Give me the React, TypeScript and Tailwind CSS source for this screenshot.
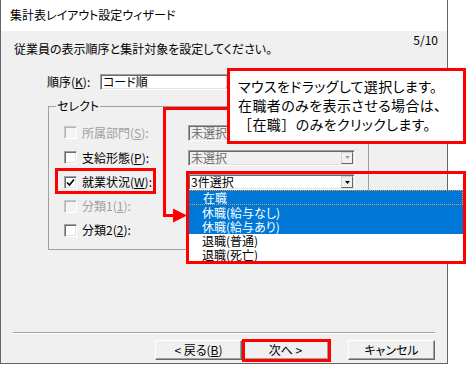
import React from "react";

const sunken =
  "border border-t-[#a0a0a0] border-l-[#a0a0a0] border-b-white border-r-white shadow-[inset_1px_1px_0_#696969,inset_-1px_-1px_0_#e3e3e3]";

function Arrow({ disabled }: { disabled?: boolean }) {
  return (
    <svg width="5" height="3" viewBox="0 0 5 3">
      <polygon points="0,0 5,0 2.5,3" fill={disabled ? "#a0a0a0" : "#000"} />
    </svg>
  );
}

function Combo({ text, disabled, w }: { text: string; disabled?: boolean; w: string }) {
  return (
    <div className={`${w} h-[16px] flex items-center ${sunken} ${disabled ? "bg-[#f0f0f0] text-[#6d6d6d]" : "bg-white"}`}>
      <span className="flex-1 pl-[2px] leading-[12px] whitespace-nowrap">{text}</span>
      <div className="w-[12px] h-[12px] mr-[1px] flex items-center justify-center bg-[#f0f0f0] border border-t-[#d4d4d4] border-l-[#d4d4d4] border-b-[#696969] border-r-[#696969]">
        <Arrow disabled={disabled} />
      </div>
    </div>
  );
}

function Check({ checked, disabled }: { checked?: boolean; disabled?: boolean }) {
  return (
    <div
      className={`w-[13px] h-[13px] shrink-0 flex items-center justify-center ${
        disabled
          ? "bg-[#f4f4f4] border border-t-[#c8c8c8] border-l-[#c8c8c8] border-b-white border-r-white shadow-[inset_1px_1px_0_#b4b4b4]"
          : `bg-white ${sunken}`
      }`}
    >
      {checked && (
        <svg width="9" height="9" viewBox="0 0 9 9">
          <polyline points="1,4.5 3.5,7 8,1.5" fill="none" stroke="#000" strokeWidth="1.7" />
        </svg>
      )}
    </div>
  );
}

type Row = { label: React.ReactNode; checked?: boolean; disabled?: boolean; combo?: string; comboDisabled?: boolean; list?: boolean; h: string };

const rows: Row[] = [
  { label: <>所属部門(<u>S</u>):</>, disabled: true, combo: "未選択", comboDisabled: true, h: "h-[25px]" },
  { label: <>支給形態(<u>P</u>):</>, combo: "未選択", comboDisabled: true, h: "h-[25px]" },
  { label: <>就業状況(<u>W</u>):</>, checked: true, combo: "3件選択", list: true, h: "h-[24px]" },
  { label: <>分類1(<u>1</u>):</>, disabled: true, h: "h-[24px]" },
  { label: <>分類2(<u>2</u>):</>, h: "h-[24px]" },
];

const items = [
  { t: "在職", sel: true, focus: true, h: "h-[15px]" },
  { t: "休職(給与なし)", sel: true, h: "h-[15px]" },
  { t: "休職(給与あり)", sel: true, h: "h-[14px]" },
  { t: "退職(普通)", h: "h-[14px]" },
  { t: "退職(死亡)", h: "h-[14px]" },
];

function Btn({ children, cls = "" }: { children: React.ReactNode; cls?: string }) {
  return (
    <div
      className={`w-[87px] h-[20px] flex items-center justify-center bg-[#f0f0f0] border border-t-white border-l-white border-b-[#696969] border-r-[#696969] shadow-[inset_-1px_-1px_0_#a0a0a0] ${cls}`}
    >
      {children}
    </div>
  );
}

export default function App() {
  return (
    <div className="relative w-[467px] h-[365px] bg-white overflow-hidden text-black text-[12px] leading-[14px] font-['Noto_Sans_CJK_JP','Noto_Sans',sans-serif] [font-feature-settings:'palt']">
      <div className="w-[448px] h-[364px] border-x border-b border-[#646464] flex flex-col">
        {/* タイトル */}
        <div className="h-[31px] bg-white pl-[9px] pt-[8px] shrink-0">集計表レイアウト設定ウィザード</div>

        <div className="flex-1 bg-[#f0f0f0] flex flex-col">
          <div className="h-[43px] flex justify-between pl-[13px] pr-[9px] shrink-0">
            <div className="pt-[11px]">従業員の表示順序と集計対象を設定してください。</div>
            <div className="pt-[2px]">5/10</div>
          </div>

          {/* 順序 */}
          <div className="h-[16px] flex items-center pl-[46px]">
            <span className="w-[53px]">
              順序(<u>K</u>):
            </span>
            <Combo text="コード順" w="w-[140px]" />
          </div>

          {/* セレクト */}
          <div className="relative ml-[47px] mt-[16px] w-[321px] h-[144px] border border-[#a0a0a0] pt-[13px] pl-[15px]">
            <span className="absolute left-[7px] top-[-8px] px-[1px] bg-[#f0f0f0]">セレクト</span>
            {rows.map((r, i) => (
              <div key={i} className={`${r.h} flex items-center`}>
                <Check checked={r.checked} disabled={r.disabled} />
                <span className={`ml-[5px] w-[106px] whitespace-nowrap ${r.disabled ? "text-[#a0a0a0]" : ""}`}>{r.label}</span>
                {r.combo && (
                  <div className="relative">
                    <Combo text={r.combo} disabled={r.comboDisabled} w="w-[167px]" />
                    {r.list && (
                      <div className="absolute left-0 top-full w-[275px] bg-white z-10">
                        {items.map((it) => (
                          <div
                            key={it.t}
                            className={`${it.h} flex items-center pl-[14px] leading-[12px] ${
                              it.sel ? "bg-[#0078d7] text-white" : ""
                            } ${it.focus ? "border border-dotted border-[#f09a3a]" : ""}`}
                          >
                            {it.t}
                          </div>
                        ))}
                      </div>
                    )}
                  </div>
                )}
              </div>
            ))}
          </div>

          {/* ボタン */}
          <div className="mt-auto flex flex-col">
            <div className="mx-[12px] h-0 border-t border-t-[#a0a0a0] border-b border-b-white" />
            <div className="flex justify-end mt-[6px] mr-[12px] mb-[3px]">
              <Btn>
                &lt; 戻る(<u>B</u>)
              </Btn>
              <Btn>次へ &gt;</Btn>
              <Btn cls="ml-[19px]">キャンセル</Btn>
            </div>
          </div>
        </div>
      </div>

      {/* 注釈 */}
      <svg className="absolute left-0 top-0 pointer-events-none" width="467" height="365">
        <polyline points="228,108.5 164.5,108.5 164.5,215.5 176,215.5" fill="none" stroke="#ff0000" strokeWidth="3" />
        <polygon points="173,208.5 187,215.5 173,222.5" fill="#ff0000" />
      </svg>
      <div className="absolute left-[55px] top-[168px] w-[101px] h-[26px] border-[3px] border-[#ff0000]" />
      <div className="absolute left-[186px] top-[171px] w-[280px] h-[93px] border-[3px] border-[#ff0000] z-20" />
      <div className="absolute left-[242px] top-[339px] w-[89px] h-[23px] border-[3px] border-[#ff0000]" />
      <div className="absolute left-[227px] top-[68px] w-[239px] h-[76px] border-[3px] border-[#ff0000] bg-white pl-[8px] pt-[6px] text-[14px] leading-[19px] tracking-[0.4px] whitespace-nowrap">
        <div>マウスをドラッグして選択します。</div>
        <div>在職者のみを表示させる場合は、</div>
        <div>
          <span className="[font-feature-settings:normal]">［在職］</span>のみをクリックします。
        </div>
      </div>
    </div>
  );
}
